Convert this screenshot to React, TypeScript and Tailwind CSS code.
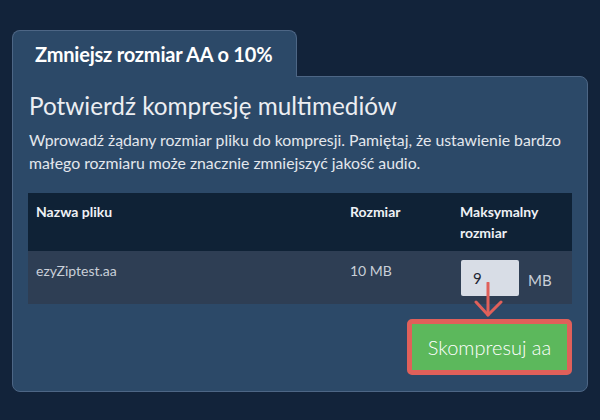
export default function App() {
  return (
    <div
      className="w-[600px] h-[420px] bg-[#12233a] pt-[30px] pl-[12px] overflow-hidden"
      style={{ fontFamily: 'Lato, "Open Sans", sans-serif' }}
    >
      {/* Tab */}
      <div className="relative z-10 -mb-px w-[285px] h-[47px] bg-[#2c4968] border border-b-0 border-[#4d6685] rounded-t-[8px] pl-[22px] flex items-center">
        <span className="text-[20px] font-bold text-white tracking-[-0.2px]">Zmniejsz rozmiar AA o 10%</span>
      </div>

      {/* Panel */}
      <div className="w-[576px] h-[316px] bg-[#2c4968] border border-[#4d6685] rounded-tr-[8px] rounded-b-[8px] px-[15px] pt-[13px]">
        <h1 className="text-[24.3px] leading-[32px] text-[#eceef2] pl-px">Potwierdź kompresję multimediów</h1>
        <p className="mt-[6px] text-[15.8px] leading-[23px] text-[#e3e7ed] pl-px">
          Wprowadź żądany rozmiar pliku do kompresji. Pamiętaj, że ustawienie bardzo małego rozmiaru może znacznie zmniejszyć jakość audio.
        </p>

        <div className="mt-[19px] w-[544px]">
          <div className="grid grid-cols-[322px_110px_1fr] bg-[#0f2236] h-[58px] pt-[8px] text-[14px] font-bold leading-[21px] text-[#eef1f5]">
            <div className="pl-[8px]">Nazwa pliku</div>
            <div>Rozmiar</div>
            <div>
              Maksymalny
              <br />
              rozmiar
            </div>
          </div>
          <div className="grid grid-cols-[322px_110px_1fr] bg-[#2e3e54] h-[53px] text-[14px] text-[#c9cfd8]">
            <div className="pl-[8px] pt-[9px]">ezyZiptest.aa</div>
            <div className="pt-[9px]">10 MB</div>
            <div className="relative flex items-start pt-[9px] pl-px">
              <div className="w-[58px] h-[36px] bg-[#d8dde6] rounded-[2px] pl-[12px] flex items-center text-[15px] text-[#1d2633]">9</div>
              <span className="ml-[9px] mt-[9px] text-[15px] text-[#c9cfd8]">MB</span>
              {/* Arrow */}
              <svg className="absolute left-[14px] top-[31px]" width="30" height="36" viewBox="0 0 30 36">
                <path d="M14 1 V33" stroke="#e0605a" strokeWidth="3" strokeLinecap="round" fill="none" />
                <path d="M2 20 L14 33 L27 20" stroke="#e0605a" strokeWidth="3" strokeLinecap="round" strokeLinejoin="round" fill="none" />
              </svg>
            </div>
          </div>
        </div>

        <div className="flex justify-end w-[544px] mt-[15px]">
          <button className="w-[165px] h-[56px] border-[5px] border-[#e0605a] rounded-[5px] bg-[#5cb85c] text-white text-[20px] font-light flex items-center justify-center">
            Skompresuj aa
          </button>
        </div>
      </div>
    </div>
  )
}
